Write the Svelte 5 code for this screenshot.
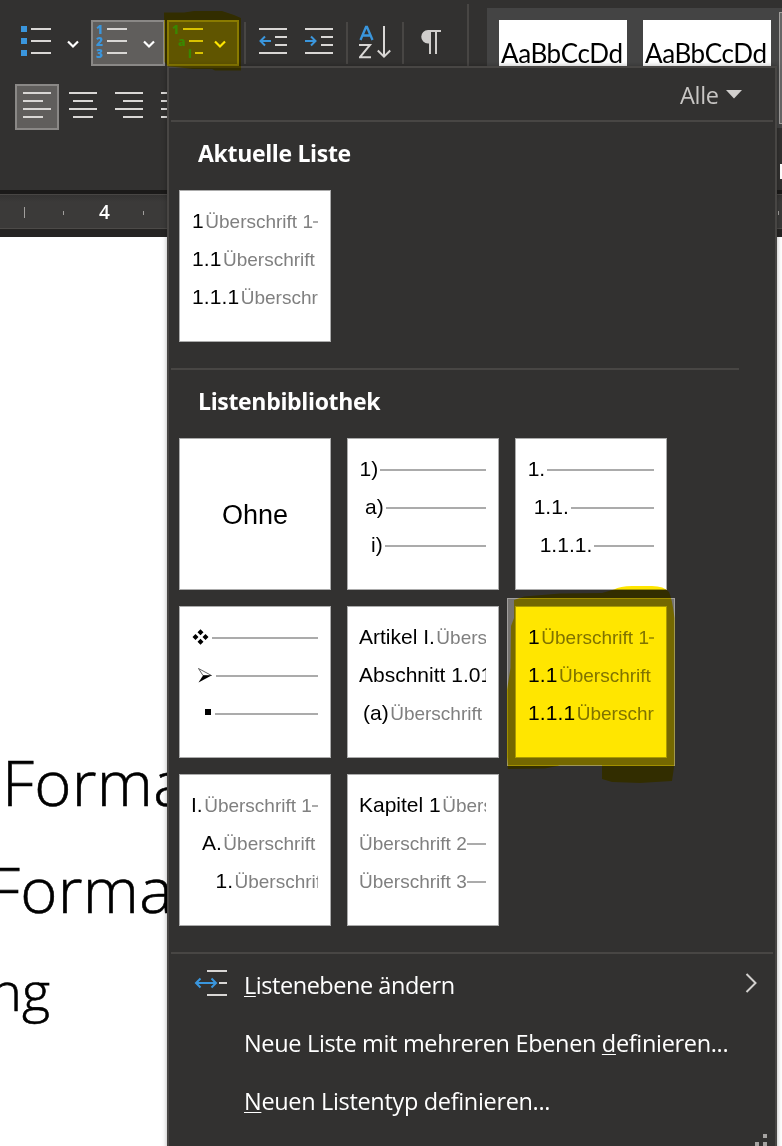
<script>
  const current = [
    { n: '1', t: 'Überschrift 1' },
    { n: '1.1', t: 'Überschrift 2' },
    { n: '1.1.1', t: 'Überschrift 3' }
  ];
  const library = [
    { none: true },
    { rows: [{ n: '1)', indent: 0.5 }, { n: 'a)', indent: 6 }, { n: 'i)', indent: 12 }] },
    { rows: [{ n: '1.', indent: 0.7 }, { n: '1.1.', indent: 6.7 }, { n: '1.1.1.', indent: 12.7 }] },
    { rows: [{ icon: 'diamonds' }, { icon: 'arrow', indent: 6 }, { icon: 'square', indent: 12 }] },
    { rows: [{ n: 'Artikel I.', t: 'Überschrift 1' }, { n: 'Abschnitt 1.01', t: 'Überschrift 2' }, { n: '(a)', t: 'Überschrift 3', indent: 4 }] },
    { rows: current, selected: true },
    { rows: [{ n: 'I.', t: 'Überschrift 1' }, { n: 'A.', t: 'Überschrift 2', indent: 11 }, { n: '1.', t: 'Überschrift 3', indent: 24.5 }] },
    { rows: [{ n: 'Kapitel 1', t: 'Überschrift 1' }, { t: 'Überschrift 2' }, { t: 'Überschrift 3' }] }
  ];
</script>

{#snippet chevron()}
  <svg class="chev" width="14" height="9" viewBox="0 0 14 9"><path d="M2 1.5 7 6.5 12 1.5" fill="none" stroke="#fff" stroke-width="2.2" /></svg>
{/snippet}

{#snippet tile(rows)}
  <div class="tile">
    <div class="clip">
      {#each rows as r}
        <div class="level" style="padding-left:{r.indent ?? 0}px">
          {#if r.icon === 'diamonds'}
            <svg width="19" height="20" viewBox="0 0 19 20"><path d="M9.500 2.300 12.500 5.300 9.500 8.300 6.500 5.300zM4.500 7 7.500 10 4.500 13 1.500 10zM14.500 7 17.500 10 14.500 13 11.500 10zM9.500 11.700 12.500 14.700 9.500 17.700 6.500 14.700z" /></svg>
          {:else if r.icon === 'arrow'}
            <svg width="17" height="20" viewBox="0 0 17 20"><path d="M1.500 3.500 14.500 10.500 6 10.500z" fill="#fff" stroke="#222" stroke-width=".7" /><path d="M6 10.500H14.500L1.500 17.500z" /></svg>
          {:else if r.icon === 'square'}
            <svg width="10" height="20" viewBox="0 0 10 20"><path d="M2 6h6v6h-6z" /></svg>
          {:else if r.n}
            <span class="num" class:digit={/^1(\.1)*$/.test(r.n)}>{r.n}</span>
          {/if}
          {#if r.t}<span class="style" class:first={!r.n}>{r.t}</span>{/if}
          <i class="rule" class:gap={!r.t}></i>
        </div>
      {/each}
    </div>
  </div>
{/snippet}

<div class="app">
  <header class="ribbon">
    <div class="tools">
      <div class="row one">
        <div class="btn bullets">
          <svg width="32" height="34" viewBox="0 0 32 34"><path fill="#3a96dd" d="M1 2h6v6h-6zM1 14h6v6h-6zM1 26h6v6h-6z" /><path fill="#d9d7d5" d="M11 4h20v2h-20zM11 16h20v2h-20zM11 28h20v2h-20z" /></svg>
          {@render chevron()}
        </div>
        <div class="btn on numbers">
          <svg width="34" height="38" viewBox="0 0 34 38"><g class="digits"><text x="1" y="10">1</text><text x="1" y="22">2</text><text x="1" y="34">3</text></g><path fill="#d9d7d5" d="M12 4h20v2h-20zM12 16h20v2h-20zM12 28h20v2h-20z" /></svg>
          {@render chevron()}
        </div>
        <div class="btn on multi">
          <svg width="34" height="38" viewBox="0 0 34 38"><g class="digits"><text x="1" y="10">1</text><text x="7" y="22">a</text><text x="17" y="34">i</text></g><path fill="#d9d7d5" d="M12 4h20v2h-20zM18 16h14v2h-14zM24 28h8v2h-8z" /></svg>
          {@render chevron()}
        </div>
        <i class="sep"></i>
        <svg class="outdent" width="28" height="28" viewBox="0 0 28 28"><path fill="#d9d7d5" d="M0 1h28v2H0zM16 9h12v2H16zM16 17h12v2H16zM0 25h28v2H0z" /><path d="M12 14H1.500M6 9.500 1.500 14 6 18.500" fill="none" stroke="#3a96dd" stroke-width="2" /></svg>
        <svg class="indent" width="28" height="28" viewBox="0 0 28 28"><path fill="#d9d7d5" d="M0 1h28v2H0zM16 9h12v2H16zM16 17h12v2H16zM0 25h28v2H0z" /><path d="M0 14H10.500M6 9.500 10.500 14 6 18.500" fill="none" stroke="#3a96dd" stroke-width="2" /></svg>
        <i class="sep s2"></i>
        <svg class="sort" width="34" height="36" viewBox="0 0 34 36"><path d="M1.500 16 7 3H8L13.500 16M3.600 11.500H11.400" fill="none" stroke="#3a96dd" stroke-width="2.300" /><path d="M0 21H11L1 33.200H12" fill="none" stroke="#d9d7d5" stroke-width="2" /><path d="M25 2V32.500M18.800 26.500 25 32.700 31.200 26.500" fill="none" stroke="#d9d7d5" stroke-width="2" /></svg>
        <i class="sep s3"></i>
        <svg class="para" width="20" height="24" viewBox="0 0 20 24"><path fill="#d0cecc" d="M7 0H20V2H16V24H14V2H10V24H8V13.500H7A6.700 6.700 0 0 1 7 0z" /></svg>
        <i class="sep tall"></i>
      </div>
      <div class="row two">
        <div class="btn on align"><svg width="28" height="26" viewBox="0 0 28 26"><path fill="#d9d7d5" d="M0 0h28v2H0zM0 8h20v2H0zM0 16h28v2H0zM0 24h20v2H0z" /></svg></div>
        <svg width="28" height="26" viewBox="0 0 28 26"><path fill="#d9d7d5" d="M0 0h28v2H0zM4 8h20v2H4zM0 16h28v2H0zM4 24h20v2H4z" /></svg>
        <svg width="28" height="26" viewBox="0 0 28 26"><path fill="#d9d7d5" d="M0 0h28v2H0zM8 8h20v2H8zM0 16h28v2H0zM8 24h20v2H8z" /></svg>
        <svg width="28" height="26" viewBox="0 0 28 26"><path fill="#d9d7d5" d="M0 0h28v2H0zM0 8h28v2H0zM0 16h28v2H0zM0 24h28v2H0z" /></svg>
      </div>
    </div>
    <div class="side">
      <div class="gallery">
        <div class="sample">AaBbCcDd</div>
        <div class="sample">AaBbCcDd</div>
        <div class="scroller"></div>
      </div>
      <div class="stub"></div>
    </div>
  </header>
  <div class="ruler"><i class="tick big"></i><i class="tick"></i><b>4</b><i class="tick t3"></i><i class="tick t4"></i></div>
  <main class="doc">
    <div class="h1">Forma</div>
    <div class="h2">Forma</div>
    <div class="h3">ng</div>
  </main>

  <section class="menu">
    <div class="filter"><span>Alle</span><svg width="16" height="9" viewBox="0 0 16 9"><path d="M0 0H16L8 8.500z" fill="#d2d0ce" /></svg></div>
    <hr />
    <h2>Aktuelle Liste</h2>
    <div class="grid">{@render tile(current)}</div>
    <hr class="short" />
    <h2>Listenbibliothek</h2>
    <div class="grid">
      {#each library as item}
        {#if item.none}
          <div class="tile none">Ohne</div>
        {:else if item.selected}
          <div class="selected">{@render tile(item.rows)}</div>
        {:else}
          {@render tile(item.rows)}
        {/if}
      {/each}
    </div>
    <hr class="last" />
    <div class="items">
      <div class="item">
        <svg class="lead" width="34" height="28" viewBox="0 0 34 28"><path fill="#d9d7d5" d="M13 1h20v2H13zM25 13h8v2h-8zM13 25h20v2H13z" /><path d="M2 14H22M6.500 9.500 2 14 6.500 18.500M17.500 9.500 22 14 17.500 18.500" fill="none" stroke="#3a96dd" stroke-width="2" /></svg>
        <span class="i1"><u>L</u>istenebene ändern</span>
        <svg class="go" width="13" height="20" viewBox="0 0 13 20"><path d="M1.500 1 10.500 10 1.500 19" fill="none" stroke="#d2d0ce" stroke-width="2" /></svg>
      </div>
      <div class="item"><span class="i2">Neue Liste mit mehreren Ebenen <u>d</u>efinieren...</span></div>
      <div class="item"><span class="i3"><u>N</u>euen Listentyp definieren...</span></div>
    </div>
    <svg class="grip" width="12" height="12" viewBox="0 0 12 12"><path fill="#a6a4a2" d="M8 0h4v4H8zM0 8h4v4H0zM8 8h4v4H8z" /></svg>
  </section>

  <svg class="marker" width="782" height="1146" viewBox="0 0 782 1146">
    <path d="M164 12.500 184 12.500 194 11H222L234 15 241 18V70.500H215L212 69H193L175 67 168 66.500 164.500 62z" />
    <path d="M514 600 524 596.500 560 593.500 602 593 614 589.500Q620 586 632 586H652Q664 586 669 592 672 598 674.500 618L674.500 764 672 781 640 783 612 782 602 779V765.500H560L545 768.500 508 769 507 757V690L510.500 668 511 626 514 618z" />
  </svg>
</div>

<style>
  :global(body) { margin: 0; }
  .app { position: relative; width: 782px; height: 1146px; overflow: hidden; background: #fff; font-family: "Open Sans", "Noto Sans", sans-serif; isolation: isolate; }
  svg { display: block; flex: none; }
  .ribbon { display: flex; height: 190px; background: #323130; }
  .tools { width: 487px; flex: none; }
  .row { display: flex; }
  .one { height: 66px; align-items: flex-start; box-sizing: border-box; }
  .btn { display: flex; flex: none; box-sizing: border-box; height: 46px; margin-top: 20px; }
  .on { border: 2px solid #8a8886; background: #605e5c; }
  .bullets { margin-left: 20px; width: 71px; }
  .bullets svg:first-child { margin-top: 4px; }
  .bullets .chev { margin: 20px 0 0 14px; }
  .numbers { width: 74px; padding: 2px 0 0 2px; }
  .multi { width: 72px; margin-left: 2px; padding: 2px 0 0 2px; }
  .numbers .chev { margin: 16px 0 0 13px; }
  .multi .chev { margin: 16px 0 0 8px; }
  .digits { fill: #3a96dd; font: 800 12px "Open Sans", sans-serif; }
  .sep { width: 2px; height: 42px; margin: 22px 0 0 5px; background: #484644; flex: none; }
  .outdent { margin: 27px 0 0 13px; }
  .indent { margin: 27px 0 0 18px; }
  .s2 { margin-left: 13px; }
  .sort { margin: 24px 0 0 11px; }
  .s3 { margin-left: 9px; }
  .para { margin: 30px 0 0 17px; }
  .tall { margin: 4px 0 0 26px; height: 62px; }
  .two { padding: 18px 0 0 15px; align-items: flex-start; gap: 18px; }
  .two .align { margin: 0 -8px 0 0; width: 44px; padding: 6px; }
  .two > svg { margin-top: 8px; }
  .side { flex: 1; min-width: 0; }
  .gallery { display: flex; gap: 16px; height: 120px; margin-top: 8px; padding: 12px 0 0 12px; box-sizing: border-box; background: #444; overflow: hidden; }
  .sample { flex: none; width: 128px; height: 90px; box-sizing: border-box; padding-left: 2px; background: #fff; font: 26px/66px Lato, sans-serif; color: #000; letter-spacing: -0.4px; white-space: nowrap; }
  .scroller { flex: none; width: 20px; height: 110px; margin: -8px 0 0 -8px; border: 1px solid #a19f9d; background: #666; }
  .stub { width: 2px; height: 15px; margin: 36px 0 0 auto; background: #fff; }
  .ruler { display: flex; box-sizing: border-box; height: 47px; border-top: 4px solid #1b1a19; border-bottom: 8px solid #252423; background: linear-gradient(#484644 0 1px, #343332 1px, #3b3a39 8px, #3b3a39 34px, #4c4a48 34px); align-items: flex-start; }
  .tick { width: 1px; height: 4px; margin: 17px 0 0 38px; background: #a19f9d; flex: none; }
  .big { height: 11px; margin: 13px 0 0 24px; }
  .ruler b { width: 11px; margin: 5px 0 0 35px; font: 600 19px/26px "Open Sans", sans-serif; color: #fff; }
  .t3 { margin-left: 33px; }
  .t4 { margin-left: 634px; }
  .doc { padding-top: 496px; color: #000; font-weight: 300; line-height: 98px; white-space: nowrap; -webkit-text-stroke: 0.6px #000; }
  .h1 { font-size: 63.5px; padding-left: 2px; height: 107px; letter-spacing: 0.3px; }
  .h2 { font-size: 63.5px; margin-left: -12px; height: 107px; letter-spacing: 0.3px; }
  .h3 { font-size: 54px; margin-left: -10px; line-height: 86px; }
  .menu { position: absolute; left: 167px; top: 66px; width: 610px; height: 1084px; box-sizing: border-box; border: 2px solid #484644; background: #323130; color: #fff; box-shadow: 0 0 5px rgba(0,0,0,.3); }
  .filter { display: flex; height: 52px; padding-left: 511px; font-size: 23.5px; line-height: 55px; color: #c8c6c4; letter-spacing: -0.3px; }
  .filter span { width: 46px; }
  .filter svg { margin-top: 22px; }
  hr { height: 2px; margin: 0 2px; border: 0; background: #484644; }
  h2 { margin: 17px 0 23px 29px; font-size: 23px; line-height: 28px; font-weight: 700; letter-spacing: -0.33px; }
  .grid { display: grid; grid-template-columns: repeat(3, 152px); grid-auto-rows: 152px; gap: 16px; margin-left: 10px; }
  .tile { box-sizing: border-box; width: 152px; height: 152px; border: 1px solid #ababab; background: #fff; color: #000; font-family: "Liberation Sans", Arial, sans-serif; }
  .short { margin: 26px 36px 0 2px; }
  .clip { width: 127px; margin-left: 11px; padding-top: 11px; overflow: hidden; }
  .level { display: flex; height: 38px; white-space: nowrap; align-items: flex-start; }
  .level svg { margin-top: 9px; }
  .num { font-size: 21px; line-height: 38px; flex: none; }
  .digit { padding-left: 1px; letter-spacing: 0.1px; }
  .style { font-size: 19px; line-height: 39px; margin-left: 1.5px; color: #808080; flex: none; }
  .style.first { margin-left: 0; }
  .rule { flex: 1 0 0; height: 2px; margin-top: 19px; background: #ababab; }
  .rule.gap { margin-left: 2px; }
  .none { font-size: 27px; line-height: 152px; text-align: center; }
  .selected { width: 168px; height: 168px; margin: -8px; box-sizing: border-box; padding: 7px; border: 1px solid #a19f9d; background: #757371; }
  .last { margin-top: 26px; }
  .items { padding-top: 2px; }
  .item { display: flex; height: 58px; padding-left: 75px; font-size: 23.500px; line-height: 58px; white-space: nowrap; }
  .i1 { letter-spacing: -0.46px; }
  .i2 { letter-spacing: -0.33px; }
  .i3 { letter-spacing: -0.33px; }
  .lead { margin: 13px 16px 0 -50px; }
  .go { margin: 17px 0 0 auto; padding-right: 17px; }
  u { text-decoration-thickness: 1px; text-underline-offset: 2px; }
  .grip { position: absolute; right: 8px; top: 1066px; }
  .marker { position: absolute; left: 0; top: 0; mix-blend-mode: multiply; fill: #ffe600; pointer-events: none; }
</style>
